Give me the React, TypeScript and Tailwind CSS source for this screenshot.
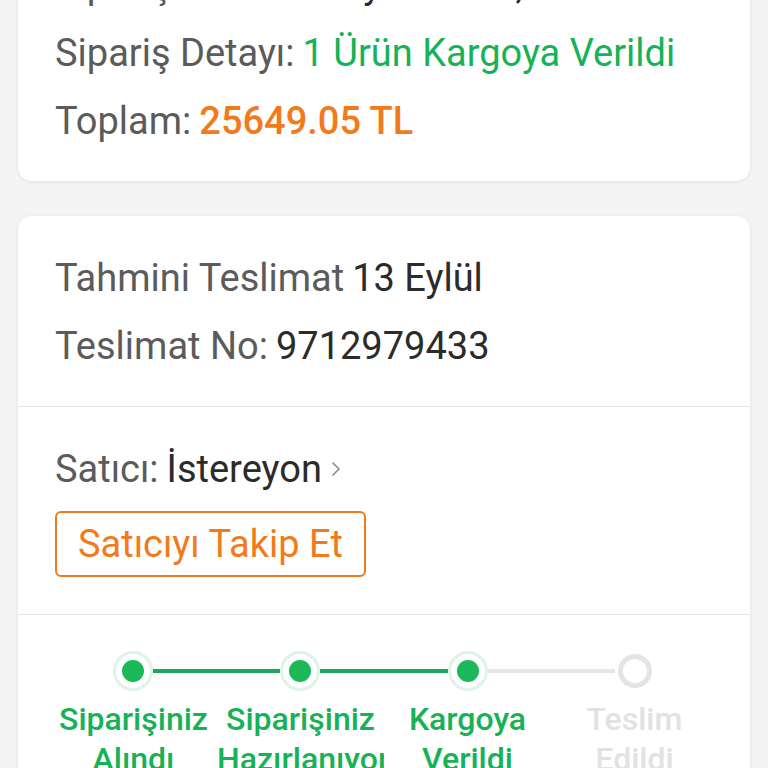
import React from 'react';
import { ChevronRight } from 'lucide-react';

const font = { fontFamily: 'Roboto, "Noto Sans", sans-serif' };

type Step = { label: string; done: boolean };

const steps: Step[] = [
  { label: 'Siparişiniz Alındı', done: true },
  { label: 'Siparişiniz Hazırlanıyor', done: true },
  { label: 'Kargoya Verildi', done: true },
  { label: 'Teslim Edildi', done: false },
];

const Row = ({ children }: { children: React.ReactNode }) => (
  <div className="h-[68px] flex items-center whitespace-nowrap">{children}</div>
);

const Dot = ({ done }: { done: boolean }) => (
  <div className="w-10 h-10 shrink-0 flex items-center justify-center">
    {done ? (
      <div className="w-10 h-10 rounded-full border-[3px] border-[#dff3e7] bg-white flex items-center justify-center">
        <div className="w-[22px] h-[22px] rounded-full bg-[#1cb95a]" />
      </div>
    ) : (
      <div className="w-[34px] h-[34px] rounded-full border-[5px] border-[#e4e4e4] bg-white" />
    )}
  </div>
);

export default function App() {
  return (
    <div className="min-h-[768px] bg-[#f4f4f4] overflow-hidden text-[38px] text-[#5b5b5b]" style={font}>
      <div className="px-[18px] -mt-[75px]">
        {/* Order summary card */}
        <div className="bg-white rounded-[14px] shadow-[0_1px_4px_rgba(0,0,0,0.08)] px-[37px] pt-[26px] pb-[26px]">
          <Row>
            <span>Sipariş Tarihi:</span>
            <span className="ml-2 text-[#2b2b2b]">10 Eylül 2023, 14:25</span>
          </Row>
          <Row>
            <span>Sipariş Detayı:</span>
            <span className="ml-2 text-[#17b257]">1 Ürün Kargoya Verildi</span>
          </Row>
          <Row>
            <span>Toplam:</span>
            <span className="ml-2 text-[#f27a1a] font-medium">25649.05 TL</span>
          </Row>
        </div>

        {/* Delivery card */}
        <div className="mt-[35px] bg-white rounded-[14px] shadow-[0_1px_4px_rgba(0,0,0,0.08)] overflow-hidden">
          <div className="px-[37px] pt-[28px] pb-[26px]">
            <Row>
              <span>Tahmini Teslimat</span>
              <span className="ml-2 text-[#2b2b2b]">13 Eylül</span>
            </Row>
            <Row>
              <span>Teslimat No:</span>
              <span className="ml-2 text-[#2b2b2b]">9712979433</span>
            </Row>
          </div>

          <div className="h-px bg-[#e3e3e3]" />

          <div className="px-[37px] pt-[40px] pb-[37px]">
            <div className="h-[44px] flex items-center whitespace-nowrap">
              <span>Satıcı:</span>
              <span className="ml-2 text-[#2b2b2b]">İstereyon</span>
              <ChevronRight size={24} strokeWidth={1.75} className="ml-0.5 text-[#8f8f8f]" />
            </div>
            <button className="mt-[20px] h-[66px] px-[21px] border-2 border-[#f27a1a] rounded-md text-[#f27a1a] bg-white leading-none">
              Satıcıyı Takip Et
            </button>
          </div>

          <div className="h-px bg-[#e3e3e3]" />

          {/* Shipment stepper */}
          <div className="px-[32px] pt-[36px] pb-[30px]">
            <div className="flex items-center px-[63px]">
              {steps.map((s, i) => (
                <React.Fragment key={s.label}>
                  <Dot done={s.done} />
                  {i < steps.length - 1 && (
                    <div className={`flex-1 h-1 ${steps[i + 1].done ? 'bg-[#20a55a]' : 'bg-[#e6e6e6]'}`} />
                  )}
                </React.Fragment>
              ))}
            </div>
            <div className="grid grid-cols-4 mt-[8px] text-[32px]">
              {steps.map((s) => (
                <div
                  key={s.label}
                  className={`overflow-hidden text-center font-medium leading-[40px] ${s.done ? 'text-[#17b257]' : 'text-[#e2e2e2]'}`}
                >
                  {s.label.split(' ').map((w) => (
                    <div key={w} className="whitespace-nowrap">{w}</div>
                  ))}
                </div>
              ))}
            </div>
          </div>
        </div>
      </div>
    </div>
  );
}
